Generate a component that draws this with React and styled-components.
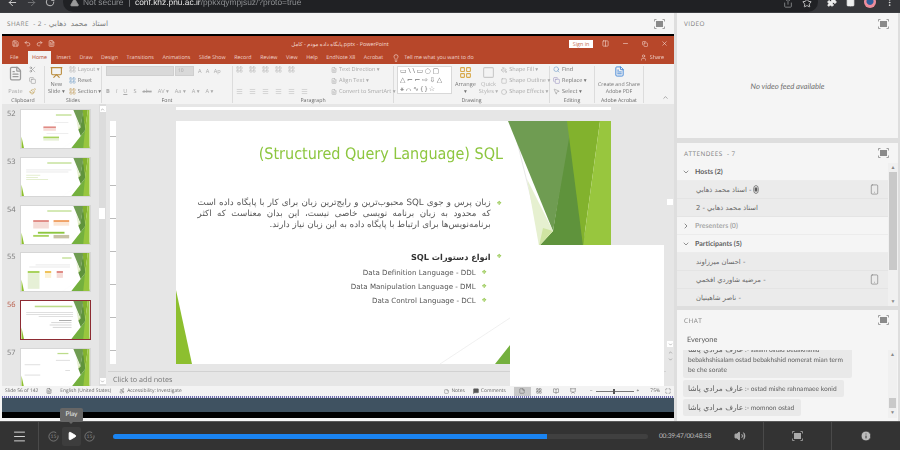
import React from "react";
import styled, { createGlobalStyle } from "styled-components";
import {
  ArrowLeft, ArrowRight, RotateCw, TriangleAlert, Share, Star, Puzzle, MoreVertical,
  Save, Undo2, Redo2, Lightbulb, User, Scissors, Copy, Paintbrush, Search, MousePointer2,
  Smartphone, ChevronDown, ChevronRight, Menu, Play, Volume2, Info, X, Minus, ChevronUp,
  MessageSquare, StickyNote, LayoutGrid, BookOpen, Presentation, Columns2, FileText,
  PaintBucket, Square, Circle, Accessibility, Maximize,
} from "lucide-react";

const GlobalStyle = createGlobalStyle`
  html, body { margin: 0; padding: 0; background: #dedede; }
  body {
    width: 900px;
    height: 450px;
    overflow: hidden;
    font-family: "Open Sans", "DejaVu Sans", sans-serif;
    text-rendering: geometricPrecision;
  }
  * { box-sizing: border-box; }
`;

const Page = styled.div`
  width: 900px;
  height: 450px;
  display: grid;
  grid-template-rows: 13px 408px 29px;
  overflow: hidden;
`;

const Browser = styled.div`
  background: #35363a;
  border-bottom: 1px solid #3d3e42;
  display: flex;
  align-items: flex-start;
  color: #c4c7c5;
  overflow: hidden;
  filter: blur(0.3px);
`;

const NavIcons = styled.div`
  display: flex;
  gap: 8px;
  padding: 0 0 0 7px;
  width: 63px;
  margin-top: -3px;
  svg { color: ${p => p.$dim || "#d5d5d5"}; }
`;

const Omnibox = styled.div`
  width: 755px;
  height: 20px;
  margin-top: -8px;
  background: #202124;
  border-radius: 14px;
  display: flex;
  align-items: center;
  padding: 0 6px 0 7px;
  font: 8.4px "Liberation Sans", sans-serif;
  color: #8d8f92;
  white-space: nowrap;
  svg { flex: none; }
`;

const Secure = styled.span`
  margin-left: 4px;
`;

const Host = styled.span`
  color: #e6e6e6;
`;

const OmniIcons = styled.div`
  margin-left: auto;
  display: flex;
  gap: 9px;
  margin-top: 2px;
`;

const Extensions = styled.div`
  display: flex;
  align-items: center;
  gap: 9px;
  margin: -4px 0 0 9px;
  color: #eee;
`;

const Avatar = styled.div`
  width: 12px;
  height: 12px;
  border-radius: 50%;
  background: radial-gradient(circle at 50% 45%, #2f5f9d 0 3px, #ee8d9c 4px);
`;

const Body = styled.div`
  display: grid;
  grid-template-columns: 677px 221px;
  gap: 0;
  background: #dedede;
`;

const SharePod = styled.section`
  background: #f5f5f5;
  padding-bottom: 3px;
  display: flex;
  flex-direction: column;
  width: 674px;
`;

const PodHeader = styled.div`
  height: ${p => p.$h || 21}px;
  display: flex;
  align-items: center;
  justify-content: space-between;
  padding: 0 ${p => p.$right || 10}px 0 ${p => p.$left || 7}px;
  font: 6.4px "Open Sans", sans-serif;
  letter-spacing: 0.45px;
  color: #7d7d7d;
  flex: none;
`;

const HeaderName = styled.span`
  font: 7.4px "DejaVu Sans", sans-serif;
  word-spacing: 2px;
`;

const FullIcon = ({ color = "#8a8a8a" }) => (
  <svg width="11" height="10" viewBox="0 0 11 10" fill="none" stroke={color} strokeWidth="0.8">
    <path d="M0.5 2.5V.5H2.5M8.5.5H10.5V2.5M10.5 7.5V9.5H8.5M2.5 9.5H.5V7.5" />
    <rect x="2" y="2" width="7" height="6" fill={color} stroke="none" />
  </svg>
);

const Frame = styled.div`
  margin-left: 2px;
  width: 672px;
  height: 384px;
  display: flex;
  flex-direction: column;
  border-top: 2px solid #000;
  filter: blur(0.35px);
  font-family: "Open Sans", "DejaVu Sans", sans-serif;
  position: relative;
`;

const TitleBar = styled.div`
  height: 15px;
  background: #b7472a;
  color: #f4ddd6;
  display: grid;
  grid-template-columns: 1fr auto 1fr;
  align-items: center;
  padding: 0 6px 0 10px;
  font-size: 5.4px;
`;

const Quick = styled.div`
  display: flex;
  gap: 5px;
  align-items: center;
`;

const Controls = styled.div`
  display: flex;
  justify-content: flex-end;
  align-items: center;
  gap: 13px;
`;

const SignIn = styled.div`
  background: #fff;
  color: #c4694f;
  width: 24px;
  height: 8px;
  line-height: 8px;
  text-align: center;
  margin-right: -4px;
`;

const Tabs = styled.div`
  height: 13px;
  background: #b7472a;
  display: flex;
  align-items: flex-end;
  padding: 0 10px 0 8px;
  font-size: 5.3px;
  color: #f0d5cd;
  gap: 8.6px;
`;

const Tab = styled.div`
  height: 13px;
  line-height: 13px;
  ${p => p.$active && `
    background: #f3f3f3;
    color: #b7472a;
    padding: 0 4px;
    margin: 0 -3px 0 1px;
  `}
  ${p => p.$push && "margin-left: auto;"}
  display: flex;
  align-items: center;
  gap: 3px;
`;

const Ribbon = styled.div`
  height: 40px;
  background: #f3f3f3;
  display: grid;
  grid-template-columns: 43px 57px 131px 161px 156px 45px 49px 1fr;
  font-size: 5.6px;
  color: #747474;
`;

const Group = styled.div`
  position: relative;
  border-right: ${p => (p.$plain ? "none" : "1px solid #dcdcdc")};
  margin: 2px 0;
  padding: 0 ${p => (p.$pad === undefined ? 3 : p.$pad)}px 8px;
  display: flex;
  gap: ${p => p.$gap || 3}px;
  align-items: stretch;
`;

const GroupLabel = styled.div`
  position: absolute;
  left: 0;
  right: 0;
  bottom: -1px;
  text-align: center;
  font-size: 5.2px;
  color: #666;
`;

const Collapse = styled.div`
  margin-left: auto;
  align-self: flex-end;
  margin-bottom: -8px;
  margin-right: 2px;
  color: #777;
`;

const Stack = styled.div`
  display: flex;
  flex-direction: column;
  justify-content: space-between;
  align-items: ${p => p.$center ? "center" : "flex-start"};
  padding: 0 ${p => p.$pad || 0}px;
  color: ${p => (p.$off ? "#b2b2b2" : "inherit")};
  white-space: nowrap;
  text-align: ${p => p.$center ? "center" : "left"};
  line-height: 7px;
  width: ${p => (p.$w ? `${p.$w}px` : "auto")};
  flex: ${p => (p.$grow ? 1 : "none")};
  font-size: ${p => p.$fs || 5.6}px;
`;

const Line = styled.div`
  display: flex;
  align-items: center;
  gap: ${p => p.$gap || 2}px;
  color: ${p => (p.$off ? "#a9a9a9" : "inherit")};
`;

const BigIcon = styled.div`
  display: flex;
  justify-content: center;
  color: ${p => p.$color || "#9a9a9a"};
  height: ${p => p.$h || 15}px;
`;

const FontBox = styled.div`
  width: ${p => p.$w}px;
  height: 10px;
  background: #d9d9d9;
  border: 1px solid #cfcfcf;
  font-size: 5px;
  color: #aaa;
  line-height: 8px;
  padding-left: 2px;
`;

const Gallery = styled.div`
  width: 55px;
  height: 28px;
  background: #fff;
  border: 1px solid #d8d8d8;
  color: #777;
  font-size: 7px;
  letter-spacing: 1.6px;
  line-height: 9px;
  padding-left: 2px;
  overflow: hidden;
  flex: none;
`;

const Workspace = styled.div`
  height: 282px;
  background: #e6e6e6;
  display: grid;
  grid-template-columns: 96px 10px 1fr 8px;
  position: relative;
  overflow: hidden;
`;

const ThumbList = styled.div`
  padding-top: 6px;
  display: flex;
  flex-direction: column;
  gap: 9.8px;
  overflow: hidden;
`;

const ThumbRow = styled.div`
  display: flex;
  align-items: flex-start;
  flex: none;
  height: 38px;
`;

const ThumbNo = styled.div`
  width: 19px;
  padding-left: 5px;
  font-size: 7.5px;
  line-height: 9px;
  color: ${p => (p.$on ? "#b5533f" : "#777")};
`;

const Thumb = styled.div`
  width: 69px;
  height: 38px;
  background: #fff;
  outline: ${p => (p.$on ? "1.5px solid #8d2b33" : "1px solid #d6d6d6")};
  outline-offset: ${p => (p.$on ? "0.5px" : "0")};
  svg { display: block; }
`;

const VScroll = styled.div`
  width: 7px;
  margin-left: 1px;
  padding: 2px 0;
  display: flex;
  flex-direction: column;
  align-items: center;
  justify-content: space-between;
  position: relative;
  background: ${p => p.$bg || "#dcdcdc"};
`;

const ScrollBtn = styled.div`
  width: 6px;
  height: 6px;
  background: #fff;
  color: #666;
  display: grid;
  place-items: center;
`;

const ScrollThumb = styled.div`
  position: absolute;
  left: 0;
  top: ${p => p.$top}px;
  width: 6px;
  height: ${p => p.$h}px;
  background: ${p => p.$bg || "#fff"};
  color: #666;
  display: grid;
  place-items: center;
`;

const Canvas = styled.div`
  display: flex;
  flex-direction: column;
  min-width: 0;
`;

const HRuler = styled.div`
  height: 3px;
  margin: 3px 0 11px 68px;
  width: 435px;
  background: repeating-linear-gradient(90deg, #fff 0 6px, #bbb 6px 6.5px, #fff 6.5px 7px);
  flex: none;
`;

const SlideRow = styled.div`
  display: flex;
  flex: none;
  height: 243px;
`;

const VRuler = styled.div`
  width: 6px;
  margin: 0 60px 0 2px;
  background: repeating-linear-gradient(180deg, #fff 0 15px, #bbb 15px 15.5px, #fff 15.5px 16.5px);
`;

const Slide = styled.div`
  width: 435px;
  height: 243px;
  background: #fff;
  position: relative;
  overflow: hidden;
  display: flex;
  flex-direction: column;
  align-items: flex-end;
  padding: 0 108px 0 0;
`;

const SlideArt = styled.svg`
  position: absolute;
  inset: 0;
`;

const SlideTitle = styled.h1`
  position: relative;
  margin: 20px 0 0;
  font: 400 16px "DejaVu Sans", sans-serif;
  font-stretch: condensed;
  color: #8dc63f;
  white-space: nowrap;
  line-height: 26px;
`;

const Para = styled.div`
  position: relative;
  display: flex;
  margin: 31px 1px 0 0;
  gap: 6px;
  align-items: flex-start;
`;

const ParaText = styled.div`
  width: 293px;
  direction: rtl;
  font: 400 8.7px/11px "DejaVu Sans", sans-serif;
  color: #555;
`;

const ParaLine = styled.div`
  text-align: ${p => (p.$last ? "right" : "justify")};
  text-align-last: ${p => (p.$last ? "right" : "justify")};
  white-space: nowrap;
`;

const Bullet = styled.span`
  color: #9ccb5a;
  font: 6px/11px "DejaVu Sans", sans-serif;
  flex: none;
`;

const Heading = styled.div`
  position: relative;
  display: flex;
  gap: 6px;
  margin: 20px 1px 0 0;
  font: 700 8.2px/12px "DejaVu Sans", sans-serif;
  color: #333;
`;

const SubItem = styled.div`
  position: relative;
  display: flex;
  gap: 6px;
  margin: ${p => p.$first ? 4 : 3}px 16px 0 0;
  font: 400 7.1px/11px "DejaVu Sans", sans-serif;
  color: #555;
`;

const Notes = styled.div`
  margin-top: 7px;
  border-top: 1px solid #d2d2d2;
  flex: 1;
  padding: 3px 0 0 5px;
  font-size: 7.2px;
  color: #777;
`;

const Overlay = styled.div`
  position: absolute;
  left: 508px;
  top: 141px;
  width: 154px;
  height: 141px;
  background: #fff;
`;

const StatusBar = styled.div`
  height: 10px;
  background: #f3f3f3;
  display: flex;
  align-items: center;
  font-size: 4.9px;
  color: #666;
  padding: 0 3px 0 3px;
  gap: 8px;
  white-space: nowrap;
`;

const StatusRight = styled.div`
  margin-left: auto;
  display: flex;
  align-items: center;
  gap: 8px;
`;

const Views = styled.div`
  display: flex;
  align-items: center;
`;

const ViewBtn = styled.div`
  width: 17px;
  height: 9px;
  background: ${p => (p.$on ? "#c8c8c8" : "transparent")};
  display: grid;
  place-items: center;
`;

const ZoomPct = styled.span`
  margin: 0 -3px 0 3px;
`;

const Zoomer = styled.div`
  width: 38px;
  height: 1px;
  background: #777;
  position: relative;
  &::after {
    content: "";
    position: absolute;
    left: 17px;
    top: -2px;
    width: 2px;
    height: 5px;
    background: #555;
  }
`;

const Dotted = styled.div`
  height: 2px;
  background: repeating-linear-gradient(90deg, #6d6db0 0 1px, #e8e8f2 1px 2px);
`;

const Taskbar = styled.div`
  height: 14px;
  background: #3f5261;
`;

const BlackBar = styled.div`
  flex: 1;
  background: #000;
`;

const Side = styled.aside`
  display: flex;
  flex-direction: column;
  font-family: "Lato", sans-serif;
  filter: blur(0.3px);
`;

const Pod = styled.section`
  background: #f5f5f5;
  height: ${p => p.$h}px;
  margin-bottom: ${p => p.$mb || 0}px;
  display: flex;
  flex-direction: column;
  position: relative;
  overflow: hidden;
`;

const NoVideo = styled.div`
  flex: 1;
  display: grid;
  place-items: center;
  font: italic 7.7px "Lato", sans-serif;
  color: #6f6f6f;
`;

const AttendeeBody = styled.div`
  display: grid;
  grid-template-columns: 1fr 10px;
  flex: 1;
  min-height: 0;
`;

const List = styled.div`
  min-width: 0;
`;

const Section = styled.div`
  height: 18px;
  display: flex;
  align-items: center;
  gap: 5px;
  padding-left: 5px;
  font: 700 7px "Lato", sans-serif;
  color: ${p => (p.$off ? "#a9a9a9" : "#5f5f5f")};
  border-bottom: 1px solid #ececec;
`;

const Person = styled.div`
  height: 18px;
  background: #ebebeb;
  border-bottom: 1px solid #e4e4e4;
  display: flex;
  align-items: center;
  padding: 0 8px 0 19px;
  font: 6.8px "DejaVu Sans", sans-serif;
  color: #676767;
  gap: 2px;
`;

const PersonEnd = styled.div`
  margin-left: auto;
  display: flex;
`;

const Track = styled.div`
  background: #f0f0f0;
  position: relative;
  display: flex;
  flex-direction: column;
  align-items: center;
  justify-content: space-between;
  color: #888;
  font-size: 5px;
  padding: 2px 0;
`;

const TrackThumb = styled.div`
  position: absolute;
  left: 1px;
  right: 1px;
  top: ${p => p.$top}px;
  height: ${p => p.$h}px;
  background: #c9c9c9;
`;

const Everyone = styled.div`
  padding: 5px 0 0 10px;
  height: 20px;
  font: 7.4px "Lato", sans-serif;
  color: #5b5b5b;
`;

const ChatBody = styled.div`
  display: grid;
  grid-template-columns: 1fr 9px;
  height: 68px;
  overflow: hidden;
  padding-right: 1px;
`;

const Messages = styled.div`
  display: flex;
  flex-direction: column;
  justify-content: flex-end;
  gap: 2px;
  height: 68px;
  padding: 0 0 2px 6px;
  overflow: hidden;
  align-items: flex-start;
`;

const Bubble = styled.div`
  background: #e9e9e9;
  border-radius: 2px;
  padding: 3.5px 7px 3.5px 5px;
  flex: none;
  width: ${p => (p.$w ? `${p.$w}px` : "auto")};
  font: 6.6px/10px "Lato", "DejaVu Sans", sans-serif;
  color: #5f5f5f;
  white-space: nowrap;
`;

const Sender = styled.span`
  font: 7.5px/0 "DejaVu Sans", sans-serif;
`;

const Controlbar = styled.footer`
  background: #333;
  border-top: 1px solid #595959;
  display: flex;
  align-items: center;
  position: relative;
  color: #b5b5b5;
  filter: blur(0.25px);
`;

const BarCell = styled.div`
  width: ${p => p.$w}px;
  height: 100%;
  display: flex;
  align-items: center;
  justify-content: ${p => p.$start ? "flex-start" : "center"};
  border-right: ${p => (p.$line ? "1px solid #4a4a4a" : "none")};
  flex: none;
  gap: ${p => p.$gap || 0}px;
  padding-left: ${p => p.$pl || 0}px;
`;

const PlayBtn = styled.div`
  width: 19px;
  height: 19px;
  background: #3d3d3d;
  border-radius: 2px;
  color: #fff;
  display: grid;
  place-items: center;
`;

const Progress = styled.div`
  width: 535px;
  height: 5px;
  background: #404040;
  border-radius: 3px;
  overflow: hidden;
  flex: none;
`;

const Played = styled.div`
  height: 100%;
  background: #1a84f2;
`;

const Time = styled.div`
  margin-left: 11px;
  width: 62px;
  font: 6.6px "Lato", "DejaVu Sans", sans-serif;
  letter-spacing: -0.2px;
  color: #bbb;
  flex: none;
  white-space: nowrap;
`;

const Tooltip = styled.div`
  position: absolute;
  left: 60px;
  top: -14px;
  width: 23px;
  height: 14px;
  background: #666;
  border-radius: 2px;
  color: #eee;
  font: 6.5px/14px "Lato", sans-serif;
  text-align: center;
  &::after {
    content: "";
    position: absolute;
    left: 9px;
    bottom: -2px;
    border: 2.5px solid transparent;
    border-top-color: #666;
    border-bottom: 0;
  }
`;

const SkipIcon = () => (
  <svg width="11" height="11" viewBox="0 0 11 11" fill="none" stroke="#8f8f8f" strokeWidth="0.7">
    <circle cx="5.5" cy="5.5" r="4.6" strokeDasharray="24 3" />
    <text x="5.5" y="7.3" textAnchor="middle" fontSize="5" fill="#8f8f8f" stroke="none" fontFamily="Lato">15</text>
  </svg>
);

const WaveIcon = () => (
  <svg width="6" height="9" viewBox="0 0 6 9" fill="none" stroke="#555" strokeWidth="0.7">
    <ellipse cx="3" cy="4.5" rx="1" ry="2" fill="#555" />
    <ellipse cx="3" cy="4.5" rx="2.4" ry="4" />
  </svg>
);

const art = (
  <>
    <polygon points="0,169 16,243 0,243" fill="#8dbf2f" />
    <line x1="264" y1="243" x2="340" y2="193" stroke="#e9e9e9" strokeWidth="0.7" />
    <line x1="336" y1="0" x2="373" y2="150" stroke="#dcdcdc" strokeWidth="0.7" />
    <polygon points="319,243 379,167 410,125 435,243" fill="#74b03e" />
    <polygon points="394,0 410,125 379,167 363,125 377,110" fill="#5f933c" />
    <polygon points="332,0 396,0 377,110" fill="#6f9c52" />
    <polygon points="351,58 377,110 363,125" fill="#e6f0d0" />
    <polygon points="367,107 377,110 363,125" fill="#cfe4a2" />
    <polygon points="391,0 424,0 407,125" fill="#82b22d" />
    <polygon points="424,0 435,0 435,243 395,243 407,125" fill="#98c63e" />
  </>
);

const thumbBits = {
  52: [["#e08b85", 140, 105, 80, 12], ["#f5dcd7", 140, 117, 80, 16], ["#a9d35f", 140, 170, 100, 12], ["#e6f0d6", 140, 182, 100, 14], ["#c9c9c9", 210, 80, 90, 2], ["#c9c9c9", 160, 150, 140, 2]],
  53: [["#d2d2d2", 30, 75, 290, 3], ["#d2d2d2", 30, 88, 270, 3], ["#c5dc9b", 30, 108, 90, 3], ["#c5dc9b", 30, 122, 75, 3], ["#c5dc9b", 30, 136, 140, 3]],
  54: [["#e08b85", 75, 90, 100, 14], ["#f5dcd7", 75, 104, 100, 40], ["#f0a266", 205, 90, 100, 14], ["#fbe7d6", 205, 104, 100, 22], ["#8dc63f", 105, 165, 170, 12], ["#a9d35f", 75, 185, 100, 12], ["#c8c2a5", 205, 185, 100, 22]],
  55: [["#cfcfcf", 90, 75, 220, 3], ["#cfcfcf", 50, 88, 260, 3], ["#a9d35f", 40, 115, 75, 14], ["#e6f0d6", 40, 129, 75, 100], ["#efc25a", 150, 115, 40, 14], ["#fbf2d8", 150, 129, 40, 30], ["#e08b85", 225, 115, 40, 14], ["#f5dcd7", 225, 129, 40, 30]],
  56: [["#bcdc8a", 85, 30, 240, 10], ["#bbb", 30, 72, 300, 3], ["#bbb", 30, 84, 300, 3], ["#bbb", 110, 96, 220, 3], ["#777", 240, 122, 80, 4], ["#aaa", 190, 138, 130, 3], ["#aaa", 180, 152, 140, 3], ["#aaa", 200, 166, 120, 3]],
  57: [["#bcdc8a", 230, 25, 70, 8], ["#bbb", 220, 70, 90, 3], ["#bbb", 20, 100, 100, 3], ["#bbb", 280, 135, 30, 3], ["#bbb", 20, 165, 100, 3]],
};

const titles = { 52: 220, 53: 165, 54: 165, 55: 260 };

const SlideThumb = ({ no, on }) => (
  <ThumbRow>
    <ThumbNo $on={on}>{no}</ThumbNo>
    <Thumb $on={on}>
      <svg width="69" height="38" viewBox="0 0 435 243">
        {art}
        {no in titles && <rect x={titles[no]} y="28" width={320 - titles[no]} height="8" fill="#bcdc8a" />}
        {thumbBits[no].map((b, i) => (
          <rect key={i} fill={b[0]} x={b[1]} y={b[2]} width={b[3]} height={b[4]} />
        ))}
      </svg>
    </Thumb>
  </ThumbRow>
);

const ic = { size: 7, strokeWidth: 1.4 };

export default function App() {
  return (
    <>
      <GlobalStyle />
      <Page>
        <Browser>
          <NavIcons>
            <ArrowLeft size={11} />
            <ArrowRight size={11} color="#77787b" />
            <RotateCw size={10} />
          </NavIcons>
          <Omnibox>
            <TriangleAlert size={9} color="#9a9a9a" fill="#9a9a9a" />
            <Secure>Not secure&nbsp;&nbsp;|&nbsp;&nbsp;<Host>conf.khz.pnu.ac.ir</Host>/ppkxqympjsuz/?proto=true</Secure>
            <OmniIcons>
              <Share size={10} color="#8d8f92" />
              <Star size={10} color="#dcdcdc" />
            </OmniIcons>
          </Omnibox>
          <Extensions>
            <Puzzle size={10} fill="#eee" />
            <Columns2 size={9} fill="#eee" />
            <Avatar />
            <MoreVertical size={9} />
          </Extensions>
        </Browser>

        <Body>
          <SharePod>
            <PodHeader $left={7} $right={9}>
              <span>SHARE &nbsp;- 2 - <HeaderName>استاذ محمد ذهابي</HeaderName></span>
              <FullIcon />
            </PodHeader>
            <Frame>
              <TitleBar>
                <Quick>
                  <Save size={7} />
                  <Undo2 size={7} />
                  <Redo2 size={7} />
                  <FileText size={7} />
                </Quick>
                <span>پایگاه داده مودم - کامل.pptx - PowerPoint</span>
                <Controls>
                  <SignIn>Sign in</SignIn>
                  <Columns2 size={7} />
                  <Minus size={7} />
                  <Copy size={6} />
                  <X size={7} />
                </Controls>
              </TitleBar>
              <Tabs>
                <Tab>File</Tab>
                <Tab $active>Home</Tab>
                <Tab>Insert</Tab>
                <Tab>Draw</Tab>
                <Tab>Design</Tab>
                <Tab>Transitions</Tab>
                <Tab>Animations</Tab>
                <Tab>Slide Show</Tab>
                <Tab>Record</Tab>
                <Tab>Review</Tab>
                <Tab>View</Tab>
                <Tab>Help</Tab>
                <Tab>EndNote X8</Tab>
                <Tab>Acrobat</Tab>
                <Tab><Lightbulb size={8} />&nbsp;Tell me what you want to do</Tab>
                <Tab $push><User size={7} />Share</Tab>
              </Tabs>
              <Ribbon>
                <Group>
                  <Stack $center $pad={3}>
                    <BigIcon $h={17}><FileText size={15} /></BigIcon>
                    <Line $off>Paste</Line>
                  </Stack>
                  <Stack>
                    <Scissors {...ic} />
                    <Copy {...ic} />
                    <Paintbrush {...ic} color="#b58a2a" />
                  </Stack>
                  <GroupLabel>Clipboard</GroupLabel>
                </Group>
                <Group $gap={4}>
                  <Stack $center>
                    <BigIcon $h={14}><Presentation size={13} color="#b98a3a" /></BigIcon>
                    <span>New<br />Slide ▾</span>
                  </Stack>
                  <Stack>
                    <Line $off><LayoutGrid {...ic} />Layout ▾</Line>
                    <Line><LayoutGrid {...ic} color="#5a8fc0" />Reset</Line>
                    <Line><LayoutGrid {...ic} color="#b98a3a" />Section ▾</Line>
                  </Stack>
                  <GroupLabel>Slides</GroupLabel>
                </Group>
                <Group>
                  <Stack $pad={1}>
                    <Line $gap={1} $off><FontBox $w={68} /><FontBox $w={19}>10</FontBox>&nbsp;&nbsp;A&nbsp;&nbsp;&nbsp;A&nbsp;&nbsp;&nbsp;Ap</Line>
                    <Line $gap={6} $off><b>B</b><i>I</i><u>U</u><span>S</span><s>abc</s><span>AV ▾</span><span>Aa ▾</span><span>A ▾</span><span>A ▾</span></Line>
                  </Stack>
                  <GroupLabel>Font</GroupLabel>
                </Group>
                <Group $gap={5}>
                  <Stack $off $w={90}>
                    <Line $gap={6} $off><LayoutGrid {...ic} /><LayoutGrid {...ic} /><LayoutGrid {...ic} /><LayoutGrid {...ic} /><LayoutGrid {...ic} /></Line>
                    <Line $gap={6} $off><Menu {...ic} /><Menu {...ic} /><Menu {...ic} /><Menu {...ic} /><Menu {...ic} /><Menu {...ic} /></Line>
                  </Stack>
                  <Stack $off>
                    <Line $off><FileText size={6} />Text Direction ▾</Line>
                    <Line $off><FileText size={6} />Align Text ▾</Line>
                    <Line $off><FileText size={6} />Convert to SmartArt ▾</Line>
                  </Stack>
                  <GroupLabel>Paragraph</GroupLabel>
                </Group>
                <Group $gap={3}>
                  <Gallery>▭\\▭○▢<br />△⌐⌐⇨⇩△<br />⚹⌒∿{"{}"}☆</Gallery>
                  <Stack $center>
                    <BigIcon $h={15}><LayoutGrid size={13} color="#d8a94b" /></BigIcon>
                    <span>Arrange<br />▾</span>
                  </Stack>
                  <Stack $center $off>
                    <BigIcon $h={15}><Square size={13} color="#c9c9c9" /></BigIcon>
                    <span>Quick<br />Styles ▾</span>
                  </Stack>
                  <Stack $off>
                    <Line $off><PaintBucket size={6} />Shape Fill ▾</Line>
                    <Line $off><Square size={6} />Shape Outline ▾</Line>
                    <Line $off><Circle size={6} />Shape Effects ▾</Line>
                  </Stack>
                  <GroupLabel>Drawing</GroupLabel>
                </Group>
                <Group>
                  <Stack>
                    <Line><Search {...ic} color="#3a77b8" />Find</Line>
                    <Line><Copy {...ic} color="#7a6fb0" />Replace ▾</Line>
                    <Line><MousePointer2 {...ic} />Select ▾</Line>
                  </Stack>
                  <GroupLabel>Editing</GroupLabel>
                </Group>
                <Group $pad={0}>
                  <Stack $center $grow $fs={5.2}>
                    <BigIcon $h={14} $color="#3f86d8"><FileText size={11} /></BigIcon>
                    <span>Create and Share<br />Adobe PDF</span>
                  </Stack>
                  <GroupLabel>Adobe Acrobat</GroupLabel>
                </Group>
                <Group $plain>
                  <Collapse><ChevronUp size={7} /></Collapse>
                </Group>
              </Ribbon>

              <Workspace>
                <ThumbList>
                  {[52, 53, 54, 55, 56, 57].map(n => (
                    <SlideThumb key={n} no={n} on={n === 56} />
                  ))}
                </ThumbList>
                <VScroll>
                  <ScrollBtn><ChevronUp size={5} /></ScrollBtn>
                  <ScrollThumb $top={104} $h={11} />
                  <ScrollBtn><ChevronDown size={5} /></ScrollBtn>
                </VScroll>
                <Canvas>
                  <HRuler />
                  <SlideRow>
                    <VRuler />
                    <Slide>
                      <SlideArt width="435" height="243" viewBox="0 0 435 243">{art}</SlideArt>
                      <SlideTitle>(Structured Query Language) SQL</SlideTitle>
                      <Para>
                        <ParaText>
                          <ParaLine>زبان پرس و جوی SQL محبوب‌ترین و رایج‌ترین زبان برای کار با پایگاه داده است</ParaLine>
                          <ParaLine>که محدود به زبان برنامه نویسی خاصی نیست، این بدان معناست که اکثر</ParaLine>
                          <ParaLine $last>برنامه‌نویس‌ها برای ارتباط با پایگاه داده به این زبان نیاز دارند.</ParaLine>
                        </ParaText>
                        <Bullet>❖</Bullet>
                      </Para>
                      <Heading>
                        <span dir="rtl">انواع دستورات SQL</span>
                        <Bullet>❖</Bullet>
                      </Heading>
                      <SubItem $first>Data Definition Language - DDL <Bullet>❖</Bullet></SubItem>
                      <SubItem>Data Manipulation Language - DML <Bullet>❖</Bullet></SubItem>
                      <SubItem>Data Control Language - DCL <Bullet>❖</Bullet></SubItem>
                    </Slide>
                  </SlideRow>
                  <Notes>Click to add notes</Notes>
                </Canvas>
                <VScroll $bg="#e6e6e6">
                  <ScrollThumb $top={95} $h={6} />
                  <ScrollThumb $top={237} $h={6}><ChevronDown size={5} /></ScrollThumb>
                  <ScrollThumb $top={245} $h={6} $bg="transparent"><ChevronUp size={5} /></ScrollThumb>
                  <ScrollThumb $top={252} $h={6} $bg="transparent"><ChevronDown size={5} /></ScrollThumb>
                </VScroll>
                <Overlay />
              </Workspace>

              <StatusBar>
                <span>Slide 56 of 142</span>
                <FileText size={6} />
                <span>English (United States)</span>
                <Line><Accessibility size={6} />Accessibility: Investigate</Line>
                <StatusRight>
                  <Line><StickyNote size={5} />Notes</Line>
                  <Line><MessageSquare size={6} fill="#555" />Comments</Line>
                  <Views>
                    <ViewBtn $on><StickyNote size={6} /></ViewBtn>
                    <ViewBtn><LayoutGrid size={6} /></ViewBtn>
                    <ViewBtn><BookOpen size={6} /></ViewBtn>
                    <ViewBtn><Presentation size={6} /></ViewBtn>
                  </Views>
                  <Line $gap={3}>−<Zoomer />+</Line>
                  <ZoomPct>75%</ZoomPct>
                  <Maximize size={6} />
                </StatusRight>
              </StatusBar>
              <Dotted />
              <Taskbar />
              <BlackBar />
            </Frame>
          </SharePod>

          <Side>
            <Pod $h={125} $mb={5}>
              <PodHeader $right={9}>
                <span>VIDEO</span>
                <FullIcon />
              </PodHeader>
              <NoVideo>No video feed available</NoVideo>
            </Pod>
            <Pod $h={163} $mb={4}>
              <PodHeader $h={20} $right={9}>
                <span>ATTENDEES &nbsp;- 7</span>
                <FullIcon />
              </PodHeader>
              <AttendeeBody>
                <List>
                  <Section><ChevronDown size={8} />Hosts (2)</Section>
                  <Person>
                    <span>استاذ محمد ذهابي -</span>
                    <WaveIcon />
                    <PersonEnd><Smartphone size={11} strokeWidth={1.2} /></PersonEnd>
                  </Person>
                  <Person><span>استاذ محمد ذهابي - 2</span></Person>
                  <Section $off><ChevronRight size={8} color="#555" />Presenters (0)</Section>
                  <Section><ChevronDown size={8} />Participants (5)</Section>
                  <Person><span>احسان ميرزاوند -</span></Person>
                  <Person>
                    <span>مرضيه شاوردي افخمي -</span>
                    <PersonEnd><Smartphone size={11} strokeWidth={1.2} /></PersonEnd>
                  </Person>
                  <Person><span>ناصر شاهينيان -</span></Person>
                </List>
                <Track>
                  <span>▲</span>
                  <TrackThumb $top={9} $h={98} />
                  <span>▼</span>
                </Track>
              </AttendeeBody>
            </Pod>
            <Pod $h={111}>
              <PodHeader $h={20} $right={9}>
                <span>CHAT</span>
                <FullIcon />
              </PodHeader>
              <Everyone>Everyone</Everyone>
              <ChatBody>
                <Messages>
                  <Bubble $w={169}><Sender>عارف مرادي پاشا</Sender> :- salam ostad bebakhshid<br />bebakhshisalam ostad bebakhshid nomerat mian term<br />be che sorate</Bubble>
                  <Bubble><Sender>عارف مرادي پاشا</Sender> :- ostad mishe rahnamaee konid</Bubble>
                  <Bubble><Sender>عارف مرادي پاشا</Sender> :- momnon ostad</Bubble>
                </Messages>
                <Track>
                  <span>▲</span>
                  <TrackThumb $top={48} $h={10} />
                  <span>▼</span>
                </Track>
              </ChatBody>
            </Pod>
          </Side>
        </Body>

        <Controlbar>
          <Tooltip>Play</Tooltip>
          <BarCell $w={39} $line><Menu size={15} strokeWidth={1.5} color="#ddd" /></BarCell>
          <BarCell $w={74} $start $pl={9} $gap={3}>
            <SkipIcon />
            <PlayBtn><Play size={10} fill="#fff" /></PlayBtn>
            <SkipIcon />
          </BarCell>
          <Progress><Played style={{ width: `${(434 / 535) * 100}%` }} /></Progress>
          <Time>00:39:47/00:48:58</Time>
          <BarCell $w={37}><Volume2 size={12} color="#aaa" fill="#aaa" /></BarCell>
          <BarCell $w={6} $line />
          <BarCell $w={68} $line><FullIcon color="#aaa" /></BarCell>
          <BarCell $w={68}><Info size={12} color="#333" fill="#bbb" /></BarCell>
        </Controlbar>
      </Page>
    </>
  );
}
